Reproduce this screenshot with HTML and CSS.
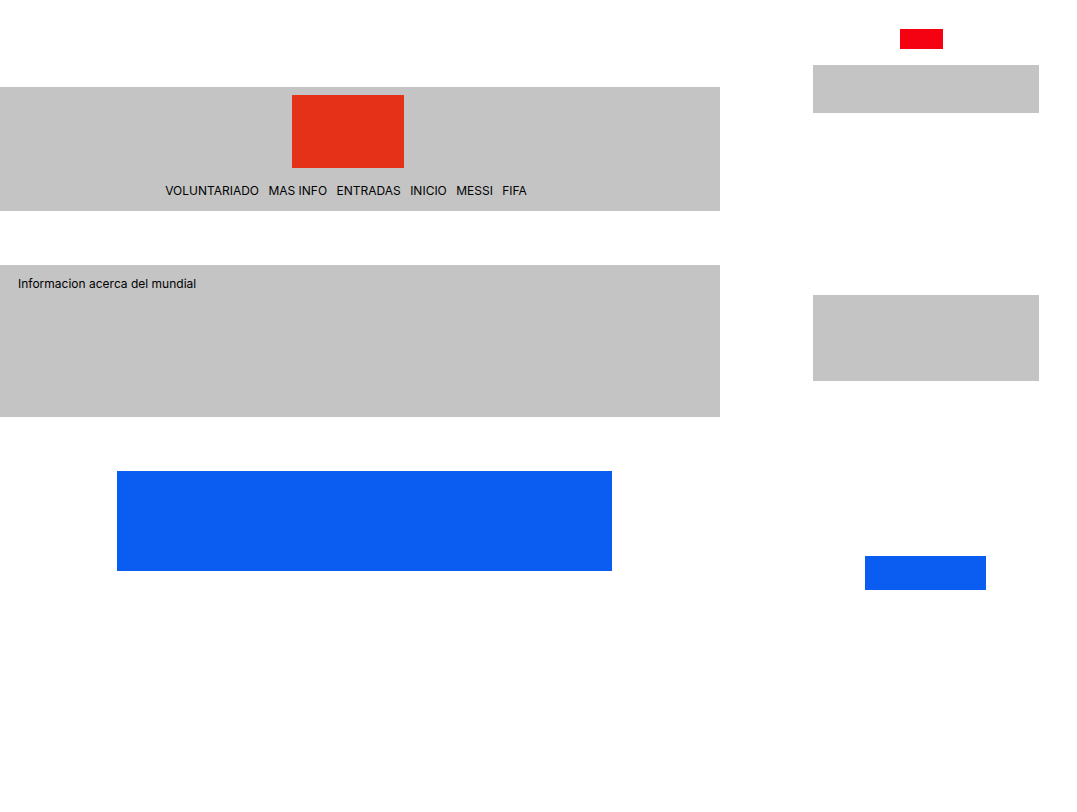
FILE: index.html
```html
<!DOCTYPE html>
<html lang="es">
<head>
  <meta charset="UTF-8">
  <title>Mundial</title>
  <link rel="stylesheet" href="styles.css">
</head>
<body>
  <div class="page">
    <div class="main">
      <header class="header">
        <div class="logo"></div>
        <nav class="nav">
          <a href="#">VOLUNTARIADO</a>
          <a href="#">MAS INFO</a>
          <a href="#">ENTRADAS</a>
          <a href="#">INICIO</a>
          <a href="#">MESSI</a>
          <a href="#">FIFA</a>
        </nav>
      </header>

      <section class="info">
        <p>Informacion acerca del mundial</p>
      </section>

      <div class="banner"></div>
    </div>

    <aside class="side">
      <div class="side-flag"></div>
      <div class="side-box"></div>
      <div class="side-box tall"></div>
      <div class="side-button"></div>
    </aside>
  </div>
</body>
</html>
```

FILE: styles.css
```css
body {
  margin: 0;
  padding: 0;
  background: #fff;
  font-family: Inter, "Liberation Sans", sans-serif;
  color: #000;
}
.page {
  display: flex;
  align-items: flex-start;
}
.main {
  width: 720px;
  padding-top: 87px;
}
.header {
  background: #c4c4c4;
  height: 124px;
  box-sizing: border-box;
  padding: 8px 28px 0 0;
  display: flex;
  flex-direction: column;
  align-items: center;
}
.logo {
  width: 112px;
  height: 73px;
  margin-left: 4px;
  background: #e63119;
}
.nav {
  display: flex;
  gap: 9.4px;
  margin-top: 15px;
  font-size: 12px;
  line-height: 15px;
}
.nav a {
  color: #000;
  text-decoration: none;
}
.info {
  background: #c4c4c4;
  height: 152px;
  margin-top: 54px;
  box-sizing: border-box;
  padding: 11px 18px;
}
.info p {
  margin: 0;
  font-size: 12px;
  line-height: 15px;
}
.banner {
  width: 495px;
  height: 100px;
  margin: 54px 0 0 117px;
  background: #0b5cf1;
}
.side {
  width: 226px;
  margin-left: 93px;
  padding-top: 29px;
  display: flex;
  flex-direction: column;
}
.side-flag {
  width: 43px;
  height: 20px;
  margin-left: 87px;
  background: #f40112;
}
.side-box {
  height: 48px;
  margin-top: 16px;
  background: #c4c4c4;
}
.side-box.tall {
  height: 86px;
  margin-top: 182px;
}
.side-button {
  width: 121px;
  height: 34px;
  margin: 175px 0 0 52px;
  background: #0b5cf1;
}
```
